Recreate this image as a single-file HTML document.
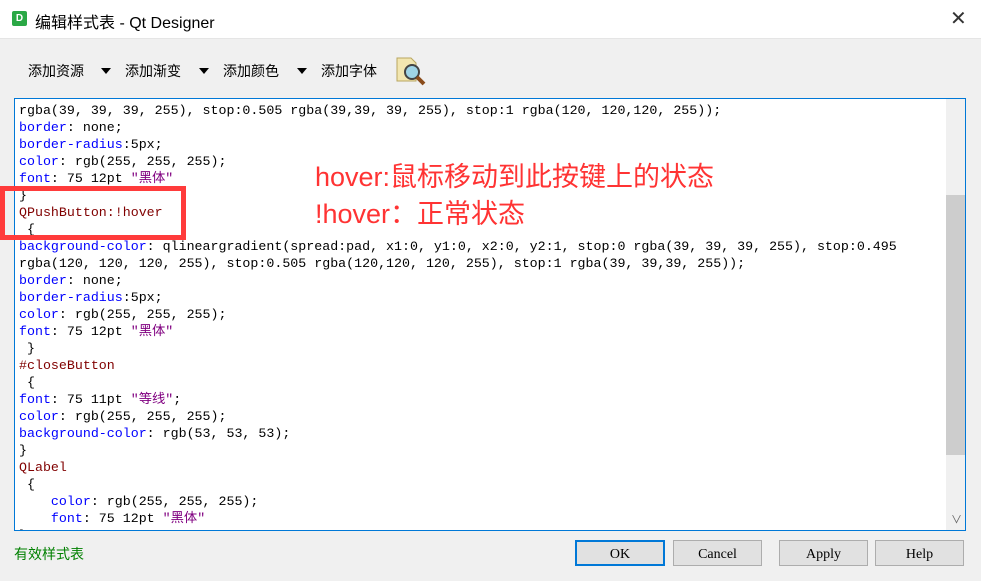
<!DOCTYPE html>
<html><head><meta charset="utf-8"><style>
body{margin:0;width:981px;height:581px;background:#f0f0f0;position:relative;overflow:hidden;font-family:"Liberation Sans","Noto Sans CJK SC",sans-serif}
.title{position:absolute;left:0;top:0;width:981px;height:38px;background:#fff;border-bottom:1px solid #e5e5e5}
.title .ic{position:absolute;left:12px;top:11px;width:15px;height:15px;background:#2aa845;border-radius:2px;color:#fff;font-size:10px;font-weight:bold;text-align:center;line-height:15px}
.title .t{position:absolute;left:35px;top:9px;font-size:16px;color:#000}
.title .x{position:absolute;left:950px;top:6px;font-size:20px;color:#333}
.tb{position:absolute;top:61px;font-size:14px;color:#000}
.arr{position:absolute;top:68px;width:0;height:0;border-left:5px solid transparent;border-right:5px solid transparent;border-top:6px solid #000}
.ed{position:absolute;left:14px;top:98px;width:950px;height:431px;border:1px solid #0078d7;background:#fff;overflow:hidden}
.code{position:absolute;left:4px;top:3px;font-family:"Liberation Mono","Noto Sans CJK SC",monospace;font-size:13.3px;line-height:17px;white-space:pre;color:#000;letter-spacing:0}
.b{color:#0000ff}.r{color:#800000}.p{color:#800080}
.sb{position:absolute;left:931px;top:0;width:19px;height:431px;background:#f0f0f0}
.th{position:absolute;left:931px;top:96px;width:19px;height:260px;background:#cdcdcd}
.note{position:absolute;left:315px;font-size:27px;color:#ff3333;font-family:"Liberation Sans","Noto Sans CJK SC",sans-serif}
.rb{position:absolute;left:0px;top:186px;width:176px;height:44px;border:5px solid #ff3b3b}
.btn{position:absolute;top:540px;width:87px;height:24px;border:1px solid #adadad;background:#e1e1e1;font-family:"Liberation Serif","Noto Serif CJK SC",serif;font-size:14px;text-align:center;line-height:27px}
</style></head><body>
<div class="title"><div class="ic">D</div><div class="t">编辑样式表 - Qt Designer</div><div class="x">✕</div></div>
<div class="tb" style="left:28px">添加资源</div><div class="arr" style="left:101px"></div>
<div class="tb" style="left:125px">添加渐变</div><div class="arr" style="left:199px"></div>
<div class="tb" style="left:223px">添加颜色</div><div class="arr" style="left:297px"></div>
<div class="tb" style="left:321px">添加字体</div>
<svg style="position:absolute;left:395px;top:55px" width="32" height="32"><path d="M2 3h14l5 5v18H2z" fill="#f2e6b0" stroke="#b9a660"/><circle cx="17" cy="17" r="7" fill="#9ed4e6" stroke="#444" stroke-width="2"/><path d="M22 22l7 7" stroke="#8a4b1a" stroke-width="4"/></svg>
<div class="ed"><div class="code">rgba(39, 39, 39, 255), stop:0.505 rgba(39,39, 39, 255), stop:1 rgba(120, 120,120, 255));
<span class="b">border</span>: none;
<span class="b">border-radius</span>:5px;
<span class="b">color</span>: rgb(255, 255, 255);
<span class="b">font</span>: 75 12pt <span class="p">"黑体"</span>
}
<span class="r">QPushButton:!hover</span>
 {
<span class="b">background-color</span>: qlineargradient(spread:pad, x1:0, y1:0, x2:0, y2:1, stop:0 rgba(39, 39, 39, 255), stop:0.495
rgba(120, 120, 120, 255), stop:0.505 rgba(120,120, 120, 255), stop:1 rgba(39, 39,39, 255));
<span class="b">border</span>: none;
<span class="b">border-radius</span>:5px;
<span class="b">color</span>: rgb(255, 255, 255);
<span class="b">font</span>: 75 12pt <span class="p">"黑体"</span>
 }
<span class="r">#closeButton</span>
 {
<span class="b">font</span>: 75 11pt <span class="p">"等线"</span>;
<span class="b">color</span>: rgb(255, 255, 255);
<span class="b">background-color</span>: rgb(53, 53, 53);
}
<span class="r">QLabel</span>
 {
    <span class="b">color</span>: rgb(255, 255, 255);
    <span class="b">font</span>: 75 12pt <span class="p">"黑体"</span>
}</div><div class="sb"></div><div class="th"></div><div style="position:absolute;left:936px;top:412px;font-size:11px;color:#606060">∨</div></div>
<div class="note" style="top:155px">hover:鼠标移动到此按键上的状态</div>
<div class="note" style="top:192px">!hover：正常状态</div>
<div class="rb"></div>
<div style="position:absolute;left:14px;top:544px;font-size:14px;color:#008000">有效样式表</div>
<div class="btn" style="left:575px;border:2px solid #0078d7;width:86px;height:22px;line-height:25px">OK</div>
<div class="btn" style="left:673px">Cancel</div>
<div class="btn" style="left:779px">Apply</div>
<div class="btn" style="left:875px">Help</div>
</body></html>
